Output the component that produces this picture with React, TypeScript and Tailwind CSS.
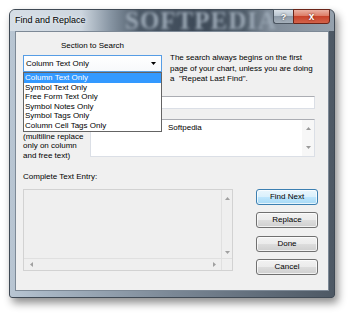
import React from "react";

function Up({ c = "#8a8a8a" }: { c?: string }) {
  return (
    <svg width="5" height="3" viewBox="0 0 5 3"><path d="M0 3 L2.5 0 L5 3 Z" fill={c} /></svg>
  );
}
function Down({ c = "#8a8a8a" }: { c?: string }) {
  return (
    <svg width="5" height="3" viewBox="0 0 5 3"><path d="M0 0 L2.5 3 L5 0 Z" fill={c} /></svg>
  );
}
function Left({ c = "#8a8a8a" }: { c?: string }) {
  return (
    <svg width="3" height="5" viewBox="0 0 3 5"><path d="M3 0 L0 2.5 L3 5 Z" fill={c} /></svg>
  );
}
function Right({ c = "#8a8a8a" }: { c?: string }) {
  return (
    <svg width="3" height="5" viewBox="0 0 3 5"><path d="M0 0 L3 2.5 L0 5 Z" fill={c} /></svg>
  );
}

function Btn({ label, def = false }: { label: string; def?: boolean }) {
  return (
    <div
      className={
        def
          ? "h-[16px] w-[62px] rounded-[3px] border border-[#3c7fb1] bg-[linear-gradient(to_bottom,#eaf6fd_0%,#d9f0fc_50%,#bee6fd_51%,#a7d9f5_100%)] flex items-center justify-center shadow-[inset_0_0_0_1px_rgba(255,255,255,0.7)]"
          : "h-[16px] w-[62px] rounded-[3px] border border-[#707070] bg-[linear-gradient(to_bottom,#f2f2f2_0%,#ebebeb_50%,#dddddd_51%,#cfcfcf_100%)] flex items-center justify-center shadow-[inset_0_0_0_1px_rgba(255,255,255,0.7)]"
      }
    >
      {label}
    </div>
  );
}

export default function App() {
  const items = [
    "Column Text Only",
    "Symbol Text Only",
    "Free Form Text Only",
    "Symbol Notes Only",
    "Symbol Tags Only",
    "Column Cell Tags Only",
  ];
  return (
    <div className="w-[350px] h-[315px] bg-white pt-[9px] pl-[9px] overflow-hidden font-['Liberation_Sans',Arial,sans-serif] text-[8px] leading-[10px] text-black">
      <div className="w-[326px] h-[289px] flex flex-col rounded-t-[6px] rounded-b-[3px] border border-[#3f4954] shadow-[3px_5px_9px_rgba(0,0,0,0.45)] bg-[linear-gradient(to_right,#b9c6d3_0%,#a9b7c5_10%,#7b8896_50%,#5e6a77_80%,#4d5864_100%)]">
        {/* title bar */}
        <div className="relative h-[21px] flex items-start rounded-t-[5px] bg-[linear-gradient(to_right,#d6dee6_0%,#cdd6df_22%,#8795a3_31%,#4d5a68_40%,#3c4856_58%,#4e5b68_72%,#7f8b98_80%,#95a1ad_100%)]">
          <div className="absolute left-[115px] top-[-2px] font-['Liberation_Serif',serif] font-bold text-[25px] leading-[25px] tracking-[1px] text-[#9aa7b4] blur-[1.4px] select-none">
            SOFTPEDIA
          </div>
          <div className="relative pl-[5px] pt-[4px] text-[9px] leading-[12px] [text-shadow:0_0_5px_#e8eef4,0_0_3px_#e8eef4]">
            Find and Replace
          </div>
          <div className="relative ml-auto mr-[4px] -mt-px flex">
            <div className="h-[15px] w-[20px] rounded-bl-[3px] border border-[#4b5560] border-r-0 bg-[linear-gradient(to_bottom,#d9e0e7_0%,#b9c4cf_45%,#8e9aa7_50%,#a5b0bb_100%)] flex items-center justify-center text-white font-bold text-[9px] [text-shadow:0_0_2px_#333]">
              ?
            </div>
            <div className="h-[15px] w-[37px] rounded-br-[3px] border border-[#6b2418] bg-[linear-gradient(to_bottom,#eab0a2_0%,#dd7c66_45%,#c8432b_50%,#d4634a_100%)] flex items-center justify-center text-white font-bold text-[10px] [text-shadow:0_0_2px_#5a1005]">
              x
            </div>
          </div>
        </div>

        {/* client area */}
        <div className="ml-[5px] mr-[5px] h-[260px] border border-[#7d8996] bg-[#f0f0f0] pl-[7px] pt-[9px]">
          {/* top row */}
          <div className="h-[55px] flex items-start">
            <div className="w-[139px] flex flex-col">
              <div className="h-[10px] text-center">Section to Search</div>
              <div className="relative mt-[4px]">
                <div className="h-[17px] border border-[#569de5] bg-[linear-gradient(to_bottom,#ffffff_0%,#f7f9fb_100%)] flex items-center pl-[2px] pr-[5px]">
                  <span>Column Text Only</span>
                  <span className="ml-auto flex">
                    <svg width="5" height="3" viewBox="0 0 5 3"><path d="M0 0 L5 0 L2.5 3 Z" fill="#000" /></svg>
                  </span>
                </div>
                <div className="absolute left-0 top-[17px] z-10 w-[139px] border border-[#646464] bg-white py-0">
                  {items.map((t, i) => (
                    <div
                      key={t}
                      className={
                        i === 0
                          ? "h-[9.6px] leading-[9.6px] pl-[1px] bg-[#3399ff] text-white"
                          : "h-[9.6px] leading-[9.6px] pl-[1px]"
                      }
                    >
                      {t}
                    </div>
                  ))}
                </div>
              </div>
            </div>
            <div className="ml-[8px] mt-[12px] leading-[10.5px]">
              <div>The search always begins on the first</div>
              <div>page of your chart, unless you are doing</div>
              <div>a &nbsp;"Repeat Last Find".</div>
            </div>
          </div>

          {/* find what row */}
          <div className="h-[13px] flex items-start">
            <div className="w-[67px]" />
            <div className="w-[225px] h-[13px] bg-white border border-[#dbdfe6] border-t-[#abadb3]" />
          </div>

          {/* replace row */}
          <div className="mt-[10px] h-[38px] flex items-start">
            <div className="w-[67px] pt-[13.2px] leading-[9.2px]">
              <div>(multiline replace</div>
              <div>only on column</div>
              <div>and free text)</div>
            </div>
            <div className="w-[225px] h-[38px] bg-white border border-[#dbdfe6] border-t-[#abadb3] flex">
              <div className="flex-1 pl-[77px] pt-[3px]">Softpedia</div>
              <div className="w-[12px] bg-[#f7f7f7] flex flex-col items-center justify-between py-[7px]">
                <Up c="#9a9a9a" />
                <Down c="#9a9a9a" />
              </div>
            </div>
          </div>

          <div className="mt-[15px] h-[10px]">Complete Text Entry:</div>

          {/* bottom row */}
          <div className="mt-[7px] flex items-start">
            <div className="w-[210px] h-[82px] border border-[#d2d2d2] bg-[#efefef] flex flex-col">
              <div className="flex-1 flex">
                <div className="flex-1" />
                <div className="w-[11px] border-l border-[#e0e0e0] flex flex-col items-center justify-between pt-[7px] pb-[4px]">
                  <Up c="#a0a0a0" />
                  <Down c="#a0a0a0" />
                </div>
              </div>
              <div className="h-[12px] border-t border-[#e0e0e0] flex">
                <div className="flex-1 flex items-center justify-between pl-[6px] pr-[5px]">
                  <Left c="#a0a0a0" />
                  <Right c="#a0a0a0" />
                </div>
                <div className="w-[11px] border-l border-[#e0e0e0]" />
              </div>
            </div>
            <div className="ml-[23px] flex flex-col">
              <Btn label="Find Next" def />
              <div className="mt-[7px]"><Btn label="Replace" /></div>
              <div className="mt-[8px]"><Btn label="Done" /></div>
              <div className="mt-[7px]"><Btn label="Cancel" /></div>
            </div>
          </div>
        </div>
      </div>
    </div>
  );
}
